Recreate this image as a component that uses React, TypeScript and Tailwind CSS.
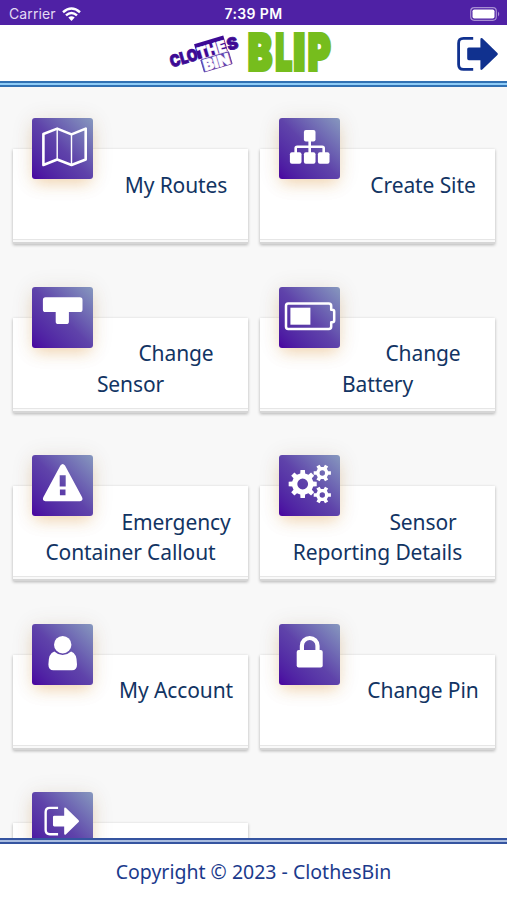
import type { ReactNode } from "react";

function MapIcon() {
    return (
        <g fill="none" stroke="#fff" strokeLinejoin="round">
            <path strokeWidth="2.6" d="M11.7 16 25.5 10.6 39.8 16.4 54 10.6V41.5L39.8 47 25.5 41.5 11.7 47Z" />
            <path strokeWidth="1.4" d="M25.5 10.6V41.5M39.8 16.4V47" />
        </g>
    );
}

function SitemapIcon() {
    return (
        <g fill="#fff">
            <rect x="25.2" y="12" width="11.6" height="11.6" rx="2" />
            <rect x="11.2" y="34.2" width="11.6" height="11.6" rx="2" />
            <rect x="25.2" y="34.2" width="11.6" height="11.6" rx="2" />
            <rect x="39.2" y="34.2" width="11.6" height="11.6" rx="2" />
            <path d="M31 22V36M17 36V30.2Q17 28.7 18.5 28.7H43.5Q45 28.7 45 30.2V36" fill="none" stroke="#fff" strokeWidth="2.6" />
        </g>
    );
}

function SensorIcon() {
    return (
        <path
            fill="#fff"
            d="M13.8 10.3H48.2Q50.8 10.3 50.8 12.9V22.4Q50.8 25 48.2 25H37.2V34.4Q37.2 37 34.6 37H26.6Q24 37 24 34.4V25H13.8Q11.2 25 11.2 22.4V12.9Q11.2 10.3 13.8 10.3Z"
        />
    );
}

function BatteryIcon() {
    return (
        <g>
            <path
                fill="none"
                stroke="#fff"
                strokeWidth="2.5"
                strokeLinejoin="round"
                d="M9.5 16.5H50Q52.5 16.5 52.5 19V22.7H53.5Q55.5 22.7 55.5 24.7V33.3Q55.5 35.3 53.5 35.3H52.5V39.5Q52.5 42 50 42H9.5Q7.3 42 7.3 39.5V19Q7.3 16.5 9.5 16.5Z"
            />
            <path fill="#fff" d="M11.7 20.7H31.7V37.7H11.7Z" />
        </g>
    );
}

function WarningIcon() {
    return (
        <path
            fill="#fff"
            fillRule="evenodd"
            d="M28.7 10.5Q31 7.5 33.3 10.5L50.4 42.2Q51.8 45.6 48.3 46.2H13.7Q10.2 45.6 11.6 42.2ZM28 20.3V31.6H34V20.3ZM28.2 34.5V40.2H33.8V34.5Z"
        />
    );
}

function gearPath(cx: number, cy: number, outer: number, inner: number, teeth: number) {
    const step = (Math.PI * 2) / teeth;
    const points: string[] = [];
    for (let i = 0; i < teeth; i++) {
        const a = i * step;
        [
            [inner, -0.29],
            [outer, -0.2],
            [outer, 0.2],
            [inner, 0.29],
        ].forEach(([r, k]) => {
            points.push(`${(cx + r * Math.cos(a + k * step)).toFixed(2)} ${(cy + r * Math.sin(a + k * step)).toFixed(2)}`);
        });
    }
    return `M${points.join("L")}Z`;
}

function hole(cx: number, cy: number, r: number) {
    return `M${cx - r} ${cy}a${r} ${r} 0 1 0 ${r * 2} 0a${r} ${r} 0 1 0 ${-r * 2} 0Z`;
}

function GearsIcon() {
    return (
        <g fill="#fff" fillRule="evenodd">
            <path d={gearPath(24, 29, 14.2, 10.8, 8) + hole(24, 29, 5.4)} />
            <path d={gearPath(43.6, 18, 8.8, 6.2, 6) + hole(43.6, 18, 2.7)} />
            <path d={gearPath(43.6, 40, 8.8, 6.2, 6) + hole(43.6, 40, 2.7)} />
        </g>
    );
}

function UserIcon() {
    return (
        <g fill="#fff">
            <path d="M22.6 27.4Q30.9 34.8 39.4 27.4Q45.3 29 45.3 40.5Q45.3 46.3 40.3 46.3H21.7Q16.7 46.3 16.7 40.5Q16.7 29 22.6 27.4Z" />
            <circle cx="31" cy="20.7" r="8.7" />
        </g>
    );
}

function LockIcon() {
    return (
        <g>
            <rect x="18" y="26" width="26" height="17.4" rx="2" fill="#fff" />
            <path d="M23.2 27V21.8a7.8 7.8 0 0 1 15.6 0V27" fill="none" stroke="#fff" strokeWidth="4.2" />
        </g>
    );
}

function ExitShape({ color }: { color: string }) {
    return (
        <g fill={color}>
            <path d="M16.2 1.4H6.5Q1.6 1.4 1.6 6.3V27.5Q1.6 32.4 6.5 32.4H16.2" fill="none" stroke={color} strokeWidth="2.8" />
            <path d="M11.8 10.5H23.4V2.2Q23.6 .2 25.3 1.3L40.4 15.9Q41.4 17 40.4 18.1L25.3 32.6Q23.6 33.7 23.4 31.7V23.2H11.8Q10.2 23.2 10.2 21.6V12.1Q10.2 10.5 11.8 10.5Z" />
        </g>
    );
}

function ExitIcon() {
    return (
        <g transform="translate(12.6 14.7) scale(.85)">
            <ExitShape color="#fff" />
        </g>
    );
}

function MenuCard({ icon, label }: { icon: ReactNode; label: string }) {
    return (
        <div className="h-[95px] w-[235px] bg-white px-3 shadow-[0_1px_3px_rgba(0,0,0,0.28)]">
            <div className="flow-root h-[90px]">
                <div className="float-left -mt-[31px] mr-[23.5px] ml-[6.5px] h-[61px] w-[61px] rounded-[3px] bg-linear-to-tr from-[#4900a0] via-[#5f43aa] to-[#8798be] shadow-[0_2px_22px_rgba(90,70,50,0.12),0_7px_14px_-3px_rgba(255,175,70,0.36)]">
                    <svg width="61" height="61" viewBox="0.3 0 61 61">
                        {icon}
                    </svg>
                </div>
                <p className="pt-[20.5px] text-center text-[21px] leading-[30.5px] tracking-[-0.1px] text-[#123463]">{label}</p>
            </div>
            <div className="-mx-3 h-[5px] border-t border-b-2 border-t-[#e6e6e6] border-b-[#d6d6d6] bg-[#f9f9f9]"></div>
        </div>
    );
}

function Logo() {
    return (
        <svg className="ml-[165px]" width="170" height="56" viewBox="165 25 170 56">
            <g transform="translate(172 68.5) rotate(-16.5)" fontFamily="Inter" fontWeight="900" fill="#3d0a94">
                <path d="M28 -17H58.5V-1H28Z" />
                <text x="0" y="-1" fontSize="16.5" textLength="28.5" lengthAdjust="spacingAndGlyphs" stroke="#3d0a94" strokeWidth=".8">CLO</text>
                <text x="29" y="-1" fontSize="16" textLength="29" lengthAdjust="spacingAndGlyphs" fill="#fff" stroke="#fff" strokeWidth=".5">THE</text>
                <text x="59.5" y="-1" fontSize="16.5" textLength="11" lengthAdjust="spacingAndGlyphs" stroke="#3d0a94" strokeWidth=".8">S</text>
                <path d="M30 0H59V12.5H30Z" fill="#6546b0" stroke="#5a3aa6" strokeWidth=".8" />
                <text x="31" y="11.7" fontSize="15" textLength="27" lengthAdjust="spacingAndGlyphs" fill="#fff" stroke="#fff" strokeWidth=".7">BIN</text>
            </g>
            <g fontFamily="Inter" fontWeight="900" fontSize="49" fill="#76bd1d" stroke="#76bd1d" strokeWidth="3.8">
                <text x="248" y="70.2" textLength="24" lengthAdjust="spacingAndGlyphs">B</text>
                <text x="275.5" y="70.2" textLength="16.5" lengthAdjust="spacingAndGlyphs">L</text>
                <text x="293.5" y="70.2" textLength="11.5" lengthAdjust="spacingAndGlyphs">I</text>
                <text x="308" y="70.2" textLength="22.5" lengthAdjust="spacingAndGlyphs">P</text>
            </g>
        </svg>
    );
}

function StatusBar() {
    return (
        <div className="grid h-[25px] shrink-0 grid-cols-3 items-center bg-[#4f21a5] px-[9px] pt-[2px] font-['Inter',sans-serif] text-[14px] text-white">
            <div className="flex items-center gap-[6px] text-[#e3daf3]">
                <span className="tracking-[0.1px]">Carrier</span>
                <svg width="19" height="14" viewBox="0 0 19 14" fill="none" stroke="#fff" strokeWidth="2.5">
                    <path d="M1 5.2Q9.5-2.2 18 5.2M4 8.4Q9.5 3.6 15 8.4" />
                    <path d="M6.3 10.5Q9.5 7.8 12.7 10.5L9.5 14Z" fill="#fff" stroke="none" />
                </svg>
            </div>
            <div className="text-center font-semibold tracking-[0.4px]">7:39 PM</div>
            <svg className="-mr-[3px] justify-self-end" width="31" height="14" viewBox="0 0 31 14">
                <rect x=".7" y=".7" width="25.6" height="12.6" rx="3.5" fill="none" stroke="#a78fd2" strokeWidth="1.2" />
                <rect x="2.5" y="2.5" width="22" height="9" rx="1.8" fill="#fff" />
                <path d="M28 4.5Q30.5 7 28 9.5Z" fill="#a78fd2" />
            </svg>
        </div>
    );
}

const items = [
    { label: "My Routes", icon: <MapIcon /> },
    { label: "Create Site", icon: <SitemapIcon /> },
    { label: "Change Sensor", icon: <SensorIcon /> },
    { label: "Change Battery", icon: <BatteryIcon /> },
    { label: "Emergency Container Callout", icon: <WarningIcon /> },
    { label: "Sensor Reporting Details", icon: <GearsIcon /> },
    { label: "My Account", icon: <UserIcon /> },
    { label: "Change Pin", icon: <LockIcon /> },
    { label: "", icon: <ExitIcon /> },
];

function App() {
    return (
        <div className="flex h-[900px] w-[507px] flex-col overflow-hidden bg-[#f8f8f8] font-['Noto_Sans',sans-serif]">
            <StatusBar />
            <header className="flex h-[56px] shrink-0 items-center justify-between bg-white pr-2">
                <Logo />
                <svg className="mt-[2px]" width="42" height="34" viewBox="0 0 42 34">
                    <ExitShape color="#10318f" />
                </svg>
            </header>
            <div className="h-[6px] shrink-0 border-y-2 border-[#3272b4] bg-[#8fcdf8]"></div>

            <main className="min-h-0 flex-1 overflow-hidden">
                <div className="grid grid-cols-[235px_235px] gap-x-3 gap-y-[73.6px] pt-[62px] pl-[13px]">
                    {items.map((item, i) => (
                        <MenuCard key={i} icon={item.icon} label={item.label} />
                    ))}
                </div>
            </main>

            <div className="h-[6px] shrink-0 border-y-2 border-[#3554a0] bg-[#a9bce0]"></div>
            <footer className="h-[56px] shrink-0 bg-white pt-[12px] text-center text-[19.5px] leading-[32px] text-[#1b3a8c]">
                Copyright © 2023 - ClothesBin
            </footer>
        </div>
    );
}

export default App;
